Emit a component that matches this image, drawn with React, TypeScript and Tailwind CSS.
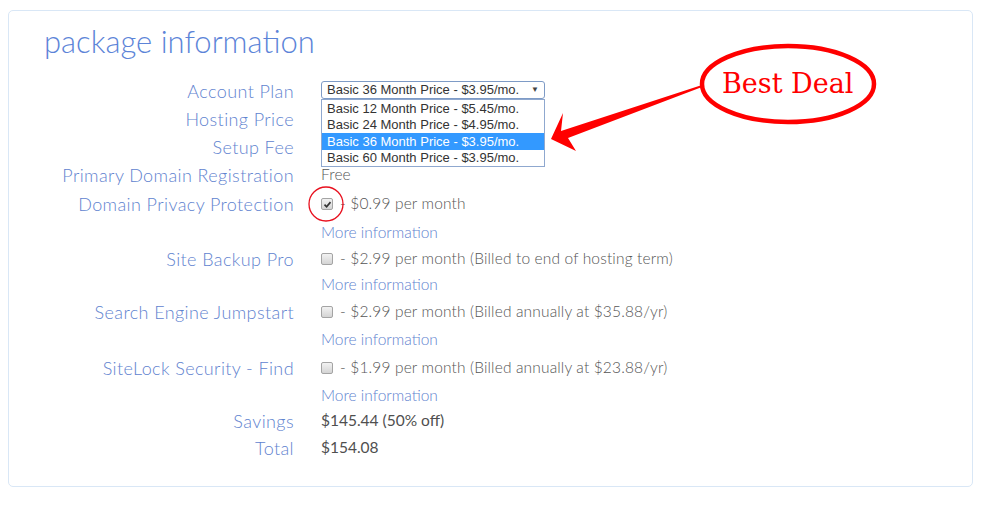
import React from "react";

const labelCls =
  "text-right text-[18px] font-light tracking-[0.4px] text-[#5f83cf] whitespace-nowrap leading-none";

const options = [
  "Basic 12 Month Price - $5.45/mo.",
  "Basic 24 Month Price - $4.95/mo.",
  "Basic 36 Month Price - $3.95/mo.",
  "Basic 60 Month Price - $3.95/mo.",
];

function Checkbox({ checked = false }: { checked?: boolean }) {
  return (
    <span className="relative inline-flex h-[12px] w-[12px] shrink-0 items-center justify-center rounded-[2px] border border-[#a4a4a4] bg-gradient-to-b from-[#f2f2f2] to-[#d4d4d4]">
      {checked && (
        <svg viewBox="0 0 12 12" className="h-[9px] w-[9px]">
          <path d="M2 6.2 L4.8 9 L10 2.8" fill="none" stroke="#333" strokeWidth="2.2" />
        </svg>
      )}
    </span>
  );
}

function Row({
  label,
  h,
  children,
}: {
  label?: string;
  h: string;
  children?: React.ReactNode;
}) {
  return (
    <div className={`grid grid-cols-[285px_1fr] gap-x-[27px] items-center ${h}`}>
      <div className={labelCls}>{label}</div>
      <div className="flex items-center">{children}</div>
    </div>
  );
}

function Value({ children, dark }: { children: React.ReactNode; dark?: boolean }) {
  return (
    <span
      className={`whitespace-nowrap text-[15.5px] leading-none ${
        dark ? "text-[#4f4f4f]" : "font-light tracking-[0.15px] text-[#555]"
      }`}
    >
      {children}
    </span>
  );
}

function MoreInfo() {
  return (
    <span className="text-[15.5px] font-light leading-none text-[#5f83cf] whitespace-nowrap">
      More information
    </span>
  );
}

function AddOn({ checked, text }: { checked?: boolean; text: string }) {
  return (
    <span className="flex items-center gap-[7px]">
      <Checkbox checked={checked} />
      <Value>- {text}</Value>
    </span>
  );
}

export default function App() {
  return (
    <div
      className="relative h-[507px] w-[986px] overflow-hidden bg-white pt-[10px] pl-[8px]"
      style={{ fontFamily: "Lato, 'Open Sans', sans-serif" }}
    >
      <div className="h-[477px] w-[965px] rounded-[5px] border border-[#d9e7f6] bg-white pt-[10px]">
        <h1 className="pl-[35px] text-[31px] font-light leading-[40px] text-[#5c84d8]">
          package information
        </h1>

        <div className="mt-[16px] flex flex-col">
          <Row label="Account Plan" h="h-[28px]">
            <div className="relative -top-[1px]">
              <div
                className="flex h-[18px] w-[224px] items-center justify-between rounded-[3px] border border-[#7e9bc6] px-[5px] text-[13px] text-[#333]"
                style={{ fontFamily: "'Liberation Sans', Arial, sans-serif" }}
              >
                <span>Basic 36 Month Price - $3.95/mo.</span>
                <span className="text-[8px] text-[#444]">▼</span>
              </div>
              <div
                className="absolute left-0 top-[18px] z-10 w-[224px] border border-[#8fa8cf] bg-white text-[13px] text-[#333]"
                style={{ fontFamily: "'Liberation Sans', Arial, sans-serif" }}
              >
                {options.map((o, i) => (
                  <div
                    key={o}
                    className={`flex h-[16.5px] items-center px-[5px] ${
                      i === 2 ? "bg-[#3399ff] text-white" : ""
                    }`}
                  >
                    {o}
                  </div>
                ))}
              </div>
            </div>
          </Row>
          <Row label="Hosting Price" h="h-[28px]" />
          <Row label="Setup Fee" h="h-[28px]" />
          <Row label="Primary Domain Registration" h="h-[28px]">
            <Value>Free</Value>
          </Row>
          <Row label="Domain Privacy Protection" h="h-[30px]">
            <AddOn checked text="$0.99 per month" />
          </Row>
          <Row h="h-[28px]">
            <MoreInfo />
          </Row>
          <Row label="Site Backup Pro" h="h-[24px]">
            <AddOn text="$2.99 per month (Billed to end of hosting term)" />
          </Row>
          <Row h="h-[28px]">
            <MoreInfo />
          </Row>
          <Row label="Search Engine Jumpstart" h="h-[26px]">
            <AddOn text="$2.99 per month (Billed annually at $35.88/yr)" />
          </Row>
          <Row h="h-[30px]">
            <MoreInfo />
          </Row>
          <Row label="SiteLock Security - Find" h="h-[26px]">
            <AddOn text="$1.99 per month (Billed annually at $23.88/yr)" />
          </Row>
          <Row h="h-[30px]">
            <MoreInfo />
          </Row>
          <Row label="Savings" h="h-[20px]">
            <Value dark>$145.44 (50% off)</Value>
          </Row>
          <Row label="Total" h="h-[34px]">
            <Value dark>$154.08</Value>
          </Row>
        </div>
      </div>

      {/* annotation overlay */}
      <svg
        className="pointer-events-none absolute left-0 top-0"
        width="986"
        height="507"
        viewBox="0 0 986 507"
      >
        <ellipse cx="788" cy="84" rx="86" ry="38" fill="none" stroke="#ff0000" strokeWidth="4.5" />
        <polygon
          points="551,139 563,113 561,131 702,85 702,87 568,138 576,151"
          fill="#ff0000"
        />
        <circle cx="326" cy="204" r="17" fill="none" stroke="#e8101e" strokeWidth="1.3" />
      </svg>
      <div
        className="absolute left-[722px] top-[70px] text-[27px] leading-none text-[#ff0000]"
        style={{ fontFamily: "'DejaVu Serif', 'Liberation Serif', serif" }}
      >
        Best Deal
      </div>
    </div>
  );
}
